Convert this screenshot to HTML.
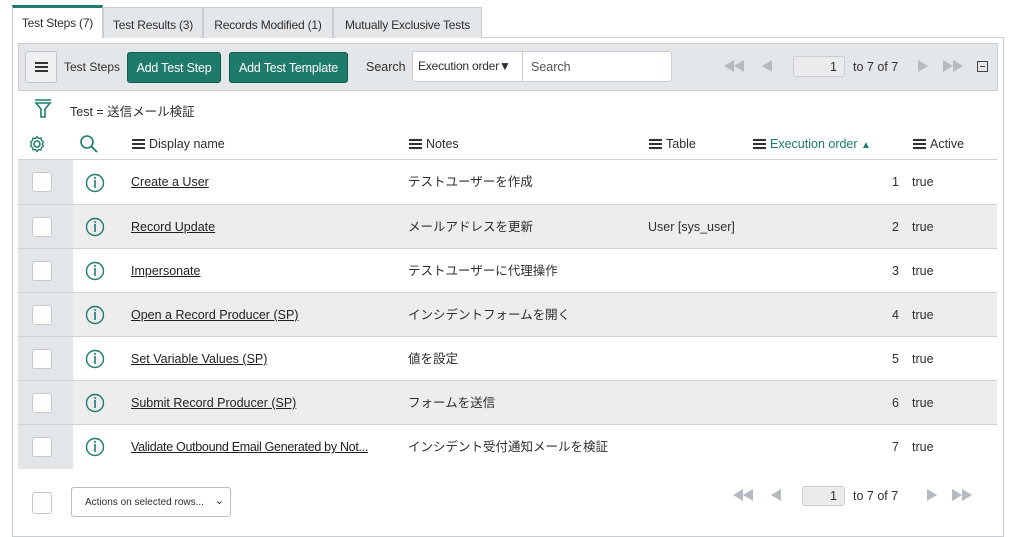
<!DOCTYPE html>
<html><head><meta charset="utf-8"><style>
*{box-sizing:border-box;margin:0;padding:0}
body{width:1015px;height:510px;overflow:hidden;background:#fff;font-family:"Liberation Sans","Noto Sans CJK JP",sans-serif;font-size:12.5px;line-height:16px;color:#2e2e2e;position:relative}
.abs{position:absolute;line-height:16px}
.tab{position:absolute;top:7px;height:31px;background:#e4e7ea;border:1px solid #c9cdd1;border-bottom:none;padding:9px 0 0;text-align:center;font-size:12px;letter-spacing:-0.2px;color:#2e2e2e;white-space:nowrap}
.tab.act{background:#fff;border-top:3px solid #1e7a6a;padding-top:7px;top:5px;height:33px}
.frame{position:absolute;left:12px;top:37px;width:992px;height:500px;border:1px solid #c9cdd1}
.tb{position:absolute;left:18px;top:43px;width:980px;height:48px;background:#e4e7ea;border:1px solid #c9cdd1}
.btn{position:absolute;top:52px;height:31px;background:#1e7a6a;border:1px solid #15594d;border-radius:3px;color:#fff;font-size:12.5px;letter-spacing:-0.2px;padding-top:7px;text-align:center}
.row{position:absolute;left:18px;width:979px;height:44px;border-top:1px solid #cfd2d4}
.row.g{background:#ededed}
.cb{position:absolute;left:0;top:0;width:55px;height:44px;background:#e3e6e8}
.cb i{position:absolute;left:14px;top:12px;width:20px;height:20px;background:#fff;border:1px solid #c4c8cc;border-radius:3px}
.row span{position:absolute;top:14px;height:16px;line-height:16px;white-space:nowrap;overflow:visible}
.u{text-decoration:underline;color:#1f1f1f}
.hd{position:absolute;top:136px;white-space:nowrap;line-height:16px}
.hm{display:inline-block;width:13px;height:10px;border-top:2px solid #333;border-bottom:2px solid #333;position:relative;margin-right:4px;vertical-align:-1px}
.hm:after{content:"";position:absolute;left:0;right:0;top:2px;height:2px;background:#333}
.tri{position:absolute;width:0;height:0;border-top:6px solid transparent;border-bottom:6px solid transparent}
.l{border-right:10px solid #b5babe}
.r{border-left:10px solid #b5babe}
</style></head><body>
<div class="frame"></div>
<div class="tab act" style="left:12px;width:91px">Test Steps (7)</div>
<div class="tab" style="left:103px;width:100px">Test Results (3)</div>
<div class="tab" style="left:203px;width:130px">Records Modified (1)</div>
<div class="tab" style="left:333px;width:149px">Mutually Exclusive Tests</div>
<div class="tb"></div>
<div class="abs" style="left:25px;top:51px;width:32px;height:32px;border:1px solid #c0c4c8;border-radius:3px;background:#eef0f2"><span class="hm" style="position:absolute;left:9px;top:10px;width:13px"></span></div>
<div class="abs" style="left:64px;top:59px;font-size:12px">Test Steps</div>
<div class="btn" style="left:127px;width:94px">Add Test Step</div>
<div class="btn" style="left:229px;width:119px">Add Test Template</div>
<div class="abs" style="left:366px;top:59px">Search</div>
<div class="abs" style="left:412px;top:51px;width:260px;height:31px;background:#fff;border:1px solid #c9cdd1;border-radius:3px"></div>
<div class="abs" style="left:522px;top:51px;width:1px;height:31px;background:#c9cdd1"></div>
<div class="abs" style="left:418px;top:58px;font-size:12px;letter-spacing:-0.2px">Execution order▼</div>
<div class="abs" style="left:531px;top:59px;color:#555">Search</div>
<div class="tri l" style="left:724px;top:60px"></div><div class="tri l" style="left:734px;top:60px"></div><div class="tri l" style="left:762px;top:60px"></div>
<div class="abs" style="left:793px;top:56px;width:52px;height:21px;border:1px solid #c9cdd1;border-radius:3px;background:#e9ebed;text-align:right;padding:2px 7px 0 0">1</div>
<div class="abs" style="left:853px;top:59px">to 7 of 7</div>
<div class="tri r" style="left:918px;top:60px"></div><div class="tri r" style="left:943px;top:60px"></div><div class="tri r" style="left:953px;top:60px"></div>
<div class="abs" style="left:977px;top:61px;width:11px;height:11px;border:1px solid #444"><div style="position:absolute;left:2px;top:4px;width:5px;height:1px;background:#444"></div></div>
<svg class="abs" style="left:33px;top:98px" width="20" height="22" viewBox="0 0 20 22"><path d="M2 2h16M3 5h14l-5 6v8h-4v-8z" fill="none" stroke="#1e7a6a" stroke-width="1.6"/></svg>
<div class="abs" style="left:70px;top:104px">Test = 送信メール検証</div>
<svg class="abs" style="left:28px;top:135px" width="18" height="18" viewBox="0 0 18 18"><circle cx="9" cy="9" r="3" fill="none" stroke="#1e7a6a" stroke-width="1.5"/><path d="M9 1.5l1.5 2 2.5-.5.5 2.5 2 1.5-1.2 2 1.2 2-2 1.5-.5 2.5-2.5-.5L9 16.5l-1.5-2-2.5.5-.5-2.5-2-1.5 1.2-2-1.2-2 2-1.5.5-2.5 2.5.5z" fill="none" stroke="#1e7a6a" stroke-width="1.3"/></svg>
<svg class="abs" style="left:79px;top:134px" width="20" height="20" viewBox="0 0 20 20"><circle cx="8" cy="8" r="6" fill="none" stroke="#1e7a6a" stroke-width="1.6"/><path d="M12.5 12.5l5.5 5.5" stroke="#1e7a6a" stroke-width="1.8"/></svg>
<div class="hd" style="left:132px"><span class="hm"></span>Display name</div>
<div class="hd" style="left:409px"><span class="hm"></span>Notes</div>
<div class="hd" style="left:649px"><span class="hm"></span>Table</div>
<div class="hd" style="left:753px;color:#1e7a6a"><span class="hm"></span>Execution order <span style="font-size:10px">▲</span></div>
<div class="hd" style="left:913px"><span class="hm"></span>Active</div>

<div class="row" style="top:159px"><div class="cb"><i></i></div><span class="u" style="left:113px">Create a User</span><span style="left:390px">テストユーザーを作成</span><span style="left:874px">1</span><span style="left:894px">true</span></div>
<div class="row g" style="top:204px"><div class="cb"><i></i></div><span class="u" style="left:113px">Record Update</span><span style="left:390px">メールアドレスを更新</span><span style="left:630px">User [sys_user]</span><span style="left:874px">2</span><span style="left:894px">true</span></div>
<div class="row" style="top:248px"><div class="cb"><i></i></div><span class="u" style="left:113px">Impersonate</span><span style="left:390px">テストユーザーに代理操作</span><span style="left:874px">3</span><span style="left:894px">true</span></div>
<div class="row g" style="top:292px"><div class="cb"><i></i></div><span class="u" style="left:113px">Open a Record Producer (SP)</span><span style="left:390px">インシデントフォームを開く</span><span style="left:874px">4</span><span style="left:894px">true</span></div>
<div class="row" style="top:336px"><div class="cb"><i></i></div><span class="u" style="left:113px">Set Variable Values (SP)</span><span style="left:390px">値を設定</span><span style="left:874px">5</span><span style="left:894px">true</span></div>
<div class="row g" style="top:380px"><div class="cb"><i></i></div><span class="u" style="left:113px">Submit Record Producer (SP)</span><span style="left:390px">フォームを送信</span><span style="left:874px">6</span><span style="left:894px">true</span></div>
<div class="row" style="top:424px"><div class="cb"><i></i></div><span class="u" style="left:113px;letter-spacing:-0.3px">Validate Outbound Email Generated by Not...</span><span style="left:390px">インシデント受付通知メールを検証</span><span style="left:874px">7</span><span style="left:894px">true</span></div>

<svg class="abs" style="left:0;top:0" width="1015" height="510">
<g fill="none" stroke="#1e7a6a" stroke-width="1.4">
<circle cx="95" cy="183" r="8.5"/><circle cx="95" cy="227" r="8.5"/><circle cx="95" cy="271" r="8.5"/><circle cx="95" cy="315" r="8.5"/><circle cx="95" cy="359" r="8.5"/><circle cx="95" cy="403" r="8.5"/><circle cx="95" cy="447" r="8.5"/>
</g>
<g stroke="#1e7a6a" stroke-width="1.6">
<path d="M95 180v8M95 224v8M95 268v8M95 312v8M95 356v8M95 400v8M95 444v8"/>
</g>
<g fill="#1e7a6a"><circle cx="95" cy="178" r="1"/><circle cx="95" cy="222" r="1"/><circle cx="95" cy="266" r="1"/><circle cx="95" cy="310" r="1"/><circle cx="95" cy="354" r="1"/><circle cx="95" cy="398" r="1"/><circle cx="95" cy="442" r="1"/></g>
</svg>

<div class="abs" style="left:32px;top:492px;width:20px;height:22px;border:1px solid #c4c8cc;border-radius:3px;background:#fff"></div>
<div class="abs" style="left:71px;top:487px;width:160px;height:30px;border:1px solid #b9bdc1;border-radius:3px;background:#fff;font-size:10px;padding:7px 0 0 13px">Actions on selected rows... <span style="position:absolute;right:6px;top:5px;font-size:11px">⌄</span></div>
<div class="tri l" style="left:733px;top:489px"></div><div class="tri l" style="left:743px;top:489px"></div><div class="tri l" style="left:771px;top:489px"></div>
<div class="abs" style="left:802px;top:486px;width:43px;height:20px;border:1px solid #c9cdd1;border-radius:3px;background:#e9ebed;text-align:right;padding:1px 7px 0 0">1</div>
<div class="abs" style="left:853px;top:488px">to 7 of 7</div>
<div class="tri r" style="left:927px;top:489px"></div><div class="tri r" style="left:952px;top:489px"></div><div class="tri r" style="left:962px;top:489px"></div>
</body></html>
